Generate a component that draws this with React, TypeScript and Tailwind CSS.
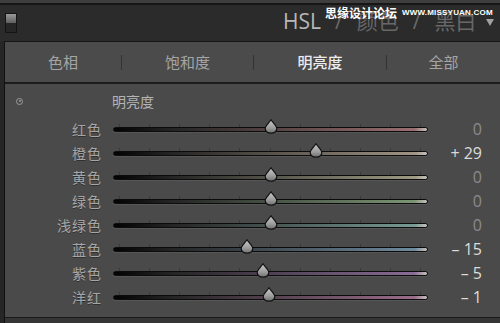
import React from "react";

type Row = {
  label: string;
  value: number;
  color: string;
};

const rows: Row[] = [
  { label: "红色", value: 0, color: "#9a6e70" },
  { label: "橙色", value: 29, color: "#a09484" },
  { label: "黄色", value: 0, color: "#9c9a82" },
  { label: "绿色", value: 0, color: "#7b9574" },
  { label: "浅绿色", value: 0, color: "#789a94" },
  { label: "蓝色", value: -15, color: "#6e8a9e" },
  { label: "紫色", value: -5, color: "#8a6c96" },
  { label: "洋红", value: -1, color: "#9a6c8c" },
];

const cjk = { fontFamily: '"Noto Sans CJK SC", "Noto Sans", sans-serif' };
const latin = { fontFamily: '"Open Sans", "Liberation Sans", sans-serif' };
const mark = { fontFamily: '"Liberation Sans", Arial, sans-serif' };

function formatValue(v: number) {
  if (v === 0) return "0";
  return v > 0 ? `+ ${v}` : `– ${Math.abs(v)}`;
}

function Thumb() {
  return (
    <svg width="14" height="15" viewBox="0 0 14 15" className="block">
      <defs>
        <linearGradient id="thumbFill" x1="0" y1="0" x2="0" y2="1">
          <stop offset="0" stopColor="#c9c9c9" />
          <stop offset="0.6" stopColor="#9d9d9d" />
          <stop offset="1" stopColor="#6e6e6e" />
        </linearGradient>
      </defs>
      <path
        d="M7 0.8 C8.5 3.5 12.8 6.5 12.8 9.6 C12.8 12.3 10.3 14.2 7 14.2 C3.7 14.2 1.2 12.3 1.2 9.6 C1.2 6.5 5.5 3.5 7 0.8 Z"
        fill="url(#thumbFill)"
        stroke="#111"
        strokeWidth="1.2"
      />
    </svg>
  );
}

function Slider({ value, color }: { value: number; color: string }) {
  const ticks = Array.from({ length: 11 }, (_, i) => i);
  const pos = 50 + value / 2;
  return (
    <div className="relative w-[315px] h-[24px]">
      <div className="absolute left-[6px] right-[8px] top-[7px] h-[3px]">
        {ticks.map((i) => (
          <div
            key={i}
            className="absolute top-0 w-px h-[3px] bg-[#3a3a3a]"
            style={{ left: `${i * 10}%` }}
          />
        ))}
      </div>
      <div
        className="absolute left-0 right-0 top-[10px] h-[5px] rounded-full border border-[#0c0c0c] shadow-[0_1px_0_rgba(255,255,255,0.07)]"
        style={{ background: `linear-gradient(to right, #030303 0%, #242424 18%, ${color} 96%, #c4c0bc 100%)` }}
      />
      <div
        className="absolute top-[2px] -translate-x-1/2"
        style={{ left: `${pos}%` }}
      >
        <Thumb />
      </div>
    </div>
  );
}

export default function App() {
  return (
    <div className="w-[500px] h-[323px] bg-[#262626] flex flex-col overflow-hidden select-none">
      {/* top strip */}
      <div className="h-[3px] bg-[#3e3e3e]" />
      <div className="h-[2px] bg-[#161616]" />

      {/* header */}
      <div className="relative h-[36px] bg-[#2b2b2b] flex items-center">
        <div className="ml-[5px] w-[12px] h-[20px] border border-[#141414] flex flex-col">
          <div className="h-1/2 bg-gradient-to-b from-[#9a9a9a] to-[#5e5e5e]" />
          <div className="h-1/2 bg-[#262626]" />
        </div>
        <div className="absolute left-[283px] top-[5px] flex items-baseline gap-[14px] text-[21px] leading-none whitespace-nowrap" style={latin}>
          <span className="text-[#b8b8b8]">HSL</span>
          <span className="text-[#6a6a6a]">/</span>
          <span className="text-[#686868]" style={cjk}>颜色</span>
          <span className="text-[#6a6a6a]">/</span>
          <span className="text-[#686868]" style={cjk}>黑白</span>
        </div>
        <div className="absolute right-[6px] top-[14px] w-0 h-0 border-l-[4px] border-r-[4px] border-t-[7px] border-l-transparent border-r-transparent border-t-[#a0a0a0]" />
        {/* watermark */}
        <div className="absolute left-[325px] top-[2px] flex items-center gap-[5px] text-white whitespace-nowrap">
          <span className="text-[12px] font-bold leading-none" style={cjk}>思缘设计论坛</span>
          <span className="text-[8px] font-bold leading-none tracking-[0.2px]" style={mark}>WWW.MISSYUAN.COM</span>
        </div>
      </div>

      <div className="flex-1 flex pl-[4px]">
        <div className="flex-1 flex flex-col border-l border-[#111] border-t border-t-[#141414]">
          {/* tabs */}
          <div className="h-[40px] bg-[#4b4b4b] flex items-center text-[15px]" style={cjk}>
            <div className="w-[116px] text-center text-[#a5a5a5]">色相</div>
            <div className="w-px h-[15px] bg-[#333]" />
            <div className="w-[131px] text-center text-[#a5a5a5]">饱和度</div>
            <div className="w-px h-[15px] bg-[#333]" />
            <div className="w-[132px] text-center text-[#ececec] font-medium">明亮度</div>
            <div className="w-px h-[15px] bg-[#333]" />
            <div className="flex-1 text-center text-[#a5a5a5]">全部</div>
          </div>
          <div className="h-[2px] bg-[#1c1c1c]" />

          {/* content */}
          <div className="flex-1 bg-[#4a4a4a] pt-[8px]">
            <div className="h-[18px] flex items-center">
              <div className="ml-[11px] w-[7px] h-[7px] rounded-full border border-[#9a9a9a] flex items-center justify-center">
                <div className="w-[2px] h-[2px] rounded-full bg-[#9a9a9a]" />
              </div>
              <span className="ml-[89px] text-[14px] text-[#b4b4b4]" style={cjk}>明亮度</span>
            </div>
            <div className="h-[7px]" />
            {rows.map((r) => (
              <div key={r.label} className="h-[24px] flex items-center">
                <div
                  className="w-[97px] text-right text-[14px] text-[#a6a6a6] tracking-[1px] [text-shadow:0_1px_0_rgba(0,0,0,0.35)]"
                  style={cjk}
                >
                  {r.label}
                </div>
                <div className="ml-[11px]">
                  <Slider value={r.value} color={r.color} />
                </div>
                <div
                  className={`w-[54px] text-right text-[16px] ${r.value === 0 ? "text-[#8c8c8c]" : "text-[#dcdcdc]"}`}
                  style={latin}
                >
                  {formatValue(r.value)}
                </div>
              </div>
            ))}
          </div>
          <div className="h-[1px] bg-[#1a1a1a]" />
          <div className="h-[5px] bg-[#353535]" />
        </div>
      </div>
    </div>
  );
}
